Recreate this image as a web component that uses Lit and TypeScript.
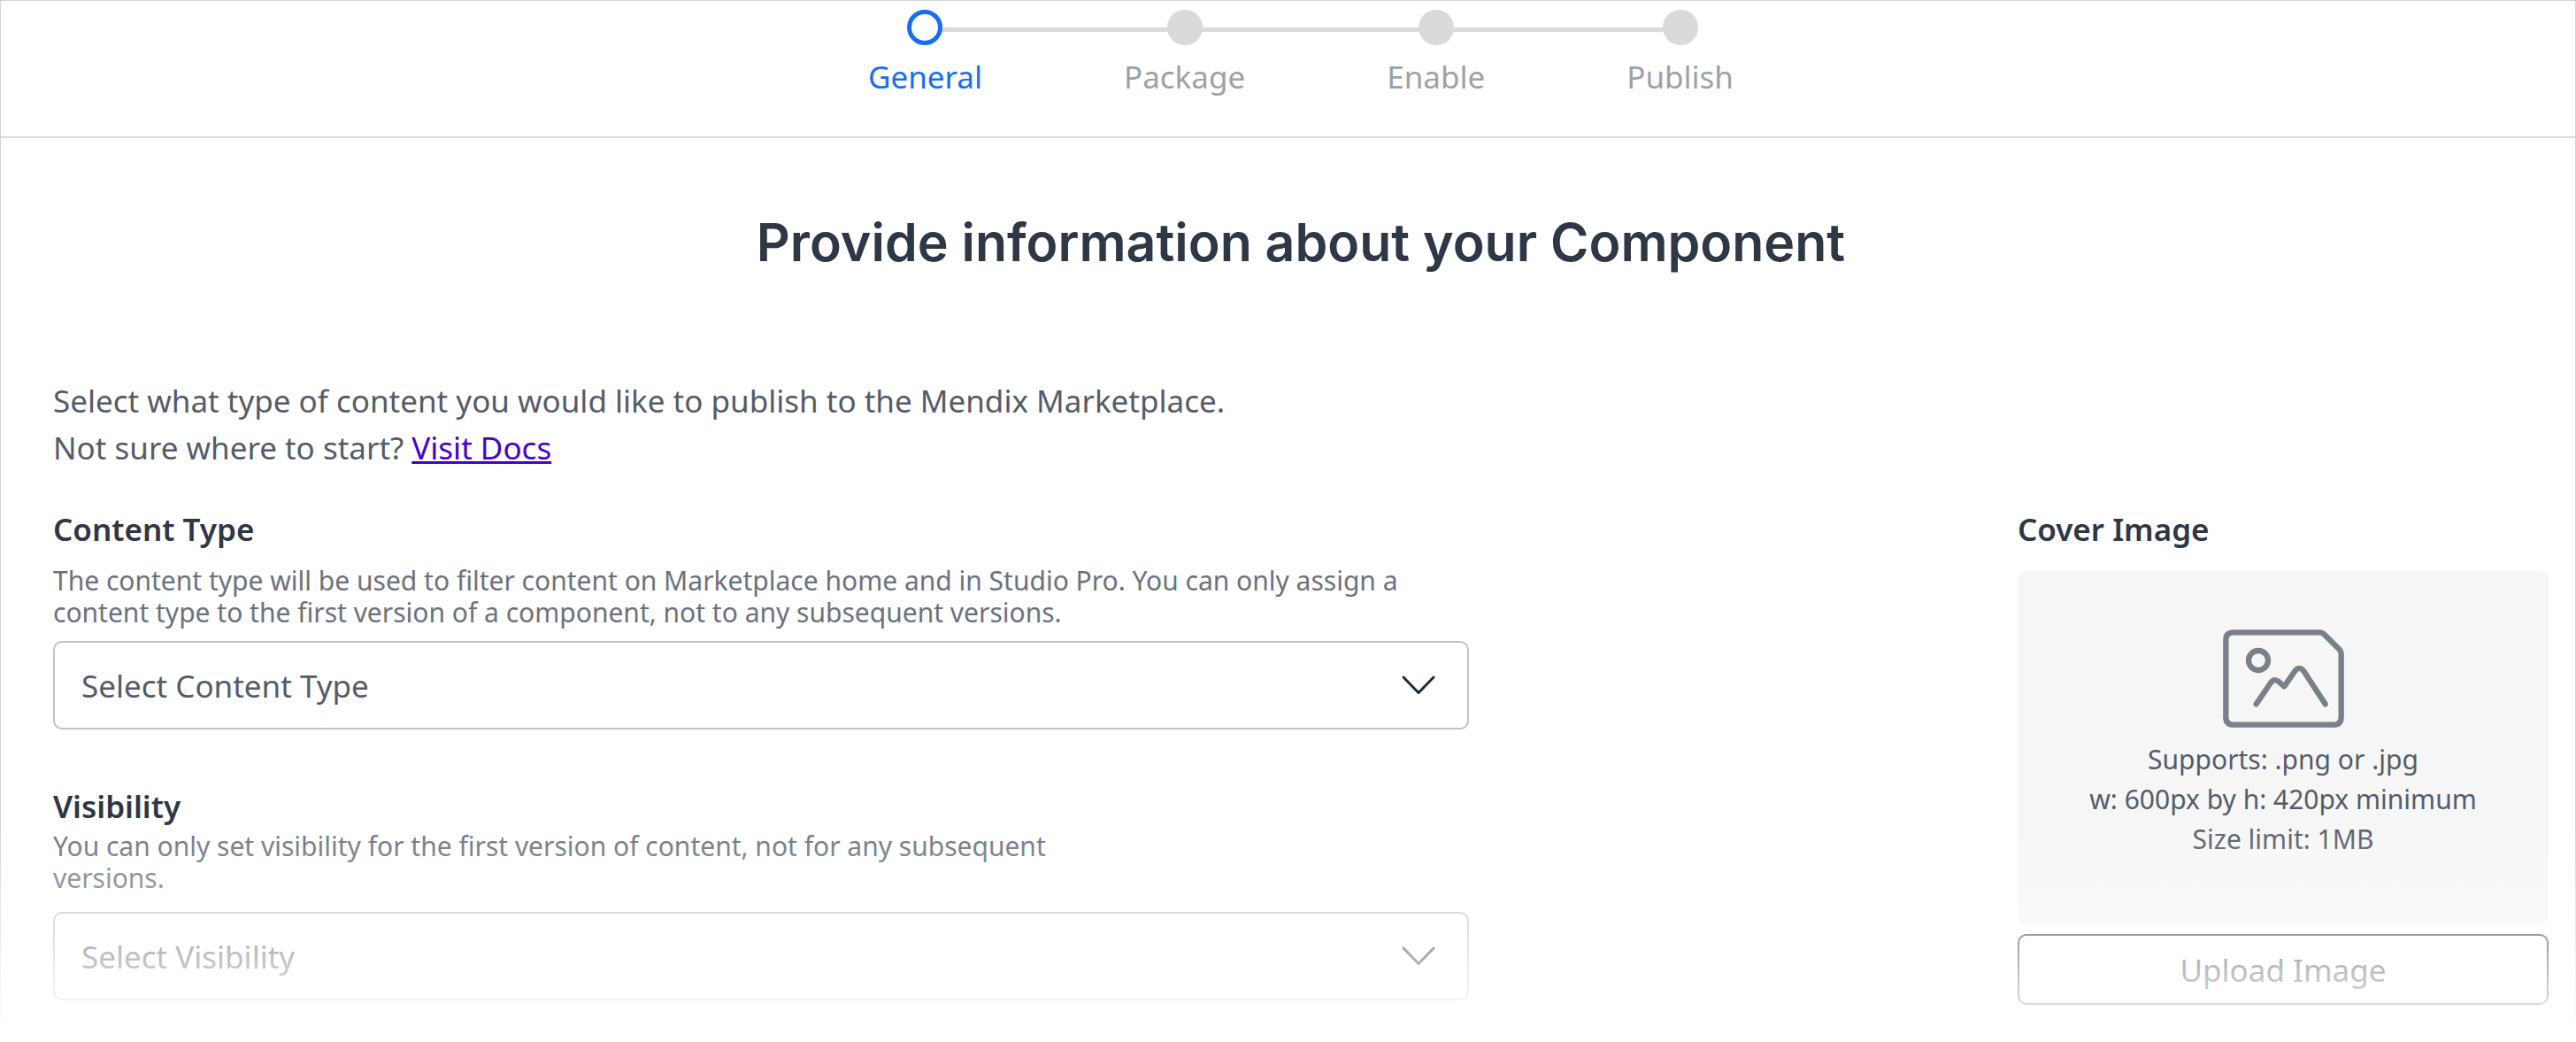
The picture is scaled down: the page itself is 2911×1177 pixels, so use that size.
import { LitElement, html, css } from "lit";
import { customElement, property } from "lit/decorators.js";

const STEPS = ["General", "Package", "Enable", "Publish"];

@customElement("step-progress")
export class StepProgress extends LitElement {
  @property({ type: Number }) current = 0;

  static styles = css`
    :host {
      display: block;
    }
    .steps {
      display: flex;
      justify-content: center;
      gap: 160px;
      margin: 0;
      padding: 0;
      list-style: none;
    }
    .step {
      position: relative;
      display: flex;
      flex-direction: column;
      align-items: center;
      gap: 12px;
      color: #9da1a9;
      font-size: 35px;
      line-height: 48px;
    }
    .dot {
      box-sizing: border-box;
      width: 40px;
      height: 40px;
      border-radius: 50%;
      background: #d9dadc;
      z-index: 1;
    }
    .step::before,
    .step::after {
      content: "";
      position: absolute;
      top: 20px;
      height: 5px;
      background: #d9dadc;
    }
    .step::before {
      left: -80px;
      right: 50%;
    }
    .step::after {
      left: 50%;
      right: -80px;
    }
    .step:first-child::before,
    .step:last-child::after {
      display: none;
    }
    .current {
      color: #146ff4;
    }
    .current .dot {
      border: 5px solid #146ff4;
      background: #fff;
    }
  `;

  render() {
    return html`<ol class="steps">
      ${STEPS.map(
        (name, i) => html`<li
          class="step ${i === this.current ? "current" : ""}"
          aria-current=${i === this.current ? "step" : "false"}
        >
          <span class="dot"></span><span>${name}</span>
        </li>`
      )}
    </ol>`;
  }
}

@customElement("select-field")
export class SelectField extends LitElement {
  @property() label = "";
  @property() hint = "";
  @property() placeholder = "";

  static styles = css`
    :host {
      display: block;
    }
    .label {
      display: block;
      color: #2f3646;
      font-size: 35px;
      font-weight: 600;
      line-height: 48px;
    }
    .hint {
      margin: var(--hint-top, 0) 0 var(--hint-bottom, 0);
      max-width: var(--hint-width, none);
      color: #6c717e;
      font-size: 30px;
      line-height: 36px;
    }
    .control {
      display: grid;
      align-items: center;
    }
    .select,
    .chevron {
      grid-area: 1 / 1;
    }
    .select {
      box-sizing: border-box;
      width: 100%;
      height: 100px;
      padding: 0 80px 0 30px;
      border: 2px solid #c1c2c9;
      border-radius: 10px;
      background: #fff;
      color: #555b69;
      font: inherit;
      font-size: 35px;
      appearance: none;
    }
    .chevron {
      justify-self: end;
      width: 38px;
      height: 22px;
      margin-right: 38px;
      fill: none;
      stroke: #1f293b;
      stroke-width: 3;
      stroke-linecap: round;
      stroke-linejoin: round;
      pointer-events: none;
    }
  `;

  render() {
    return html`
      <label class="label" for="field">${this.label}</label>
      <p class="hint" id="hint">${this.hint}</p>
      <div class="control">
        <select class="select" id="field" aria-describedby="hint">
          <option>${this.placeholder}</option>
        </select>
        <svg class="chevron" viewBox="0 0 38 22" aria-hidden="true">
          <path d="M2 2 19 19.500 36 2" />
        </svg>
      </div>
    `;
  }
}

@customElement("cover-image")
export class CoverImage extends LitElement {
  static styles = css`
    :host {
      display: block;
    }
    .title {
      margin: 0 0 23px;
      color: #2f3646;
      font-size: 35px;
      font-weight: 600;
      line-height: 48px;
    }
    .preview {
      display: flex;
      flex-direction: column;
      align-items: center;
      box-sizing: border-box;
      min-height: 400px;
      padding-top: 66px;
      border-radius: 10px;
      background: #f6f6f6;
    }
    .picture {
      width: 137px;
      height: 111px;
      fill: none;
      stroke: #7b7f8a;
      stroke-width: 19;
      stroke-linecap: round;
      stroke-linejoin: round;
    }
    .rules {
      margin: 13px 0 0;
      color: #555b69;
      font-size: 30px;
      line-height: 45px;
      text-align: center;
    }
    .line {
      display: block;
    }
    .upload {
      display: block;
      box-sizing: border-box;
      width: 100%;
      height: 80px;
      margin-top: 10px;
      border: 2px solid #2a3244;
      border-radius: 10px;
      background: #fff;
      color: #2f3646;
      font: inherit;
      font-size: 35px;
    }
  `;

  render() {
    return html`
      <h2 class="title">Cover Image</h2>
      <div class="preview">
        <svg class="picture" viewBox="0 0 411 333" aria-hidden="true">
          <path
            d="M36 10H328Q337 10 344 17L393 66Q401 74 401 84V297Q401 323 375 323H36Q10 323 10 297V36Q10 10 36 10Z"
          />
          <circle cx="120" cy="105" r="33" />
          <path d="M113 253 162 181Q174 164 189 177L208 193 244 141Q259 122 274 141L347 253" />
        </svg>
        <p class="rules">
          <span class="line">Supports: .png or .jpg</span>
          <span class="line">w: 600px by h: 420px minimum</span>
          <span class="line">Size limit: 1MB</span>
        </p>
      </div>
      <button class="upload" type="button">Upload Image</button>
    `;
  }
}

@customElement("app-root")
export class AppRoot extends LitElement {
  static styles = css`
    :host {
      display: block;
      position: relative;
      box-sizing: border-box;
      min-height: 100vh;
      border: 1px solid #d4d5d7;
      border-bottom: 0;
      background: #fff;
      font-family: "Noto Sans", sans-serif;
    }
    .header {
      padding: 10px 30px 43px 59px;
      border-bottom: 2px solid #dbdcdd;
    }
    .main {
      padding: 80px 30px 40px 59px;
    }
    .heading {
      margin: 0;
      color: #2f3646;
      font-family: Inter, sans-serif;
      font-size: 59px;
      font-weight: 600;
      line-height: 76px;
      text-align: center;
    }
    .intro {
      margin: 114px 0 0;
      color: #555b69;
      font-size: 35px;
      line-height: 53px;
    }
    .docs {
      color: #4600d2;
      text-decoration-thickness: 3px;
    }
    .columns {
      display: flex;
      justify-content: space-between;
      align-items: flex-start;
      margin-top: 42px;
    }
    .form {
      display: flex;
      flex-direction: column;
      gap: 63px;
      flex: 0 1 1600px;
    }
    .type {
      --hint-top: 16px;
      --hint-bottom: 14px;
    }
    .visibility {
      --hint-width: 1200px;
      --hint-top: 3px;
      --hint-bottom: 20px;
    }
    .cover {
      flex: 0 0 600px;
    }
    .fade {
      position: absolute;
      inset: auto -1px 0;
      height: 250px;
      background: linear-gradient(rgba(255, 255, 255, 0), #fff);
      pointer-events: none;
    }
  `;

  render() {
    return html`
      <header class="header"><step-progress current="0"></step-progress></header>
      <main class="main">
        <h1 class="heading">Provide information about your Component</h1>
        <p class="intro">
          Select what type of content you would like to publish to the Mendix Marketplace.<br />
          Not sure where to start? <a class="docs" href="#docs">Visit Docs</a>
        </p>
        <div class="columns">
          <div class="form">
            <select-field
              class="type"
              label="Content Type"
              hint="The content type will be used to filter content on Marketplace home and in Studio Pro. You can only assign a content type to the first version of a component, not to any subsequent versions."
              placeholder="Select Content Type"
            ></select-field>
            <select-field
              class="visibility"
              label="Visibility"
              hint="You can only set visibility for the first version of content, not for any subsequent versions."
              placeholder="Select Visibility"
            ></select-field>
          </div>
          <cover-image class="cover"></cover-image>
        </div>
      </main>
      <div class="fade"></div>
    `;
  }
}
